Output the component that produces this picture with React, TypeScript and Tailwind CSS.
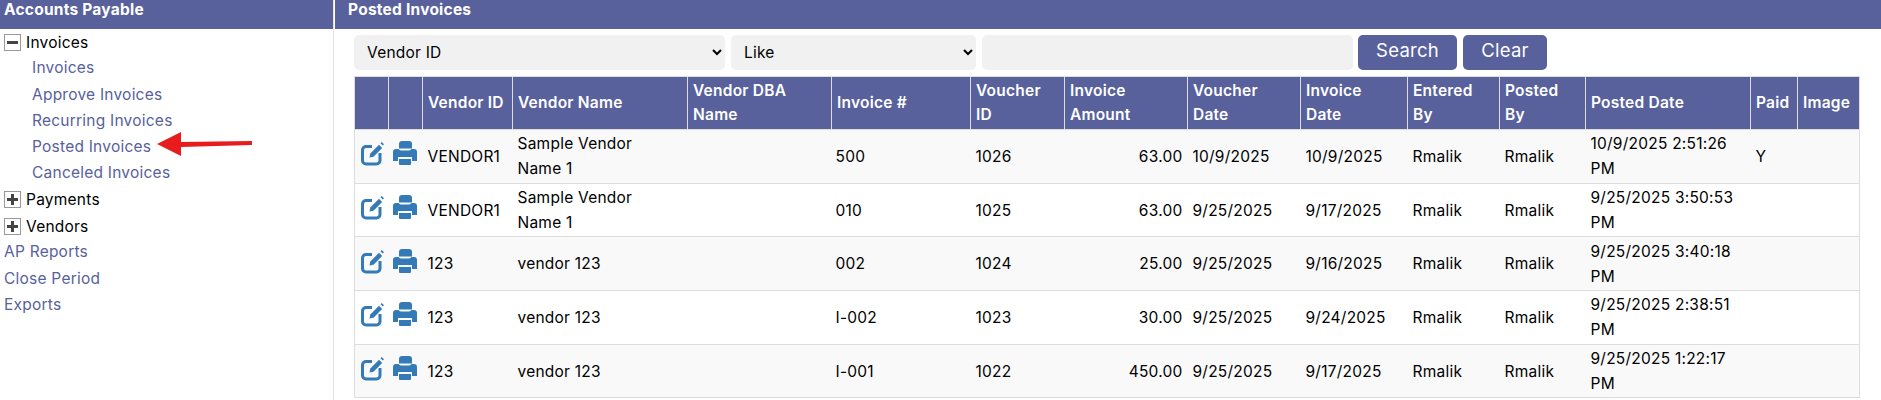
const rows = [
  { id: "VENDOR1", name: "Sample Vendor\nName 1", inv: "500", vch: "1026", amt: "63.00", vDate: "10/9/2025", iDate: "10/9/2025", posted: "10/9/2025 2:51:26\nPM", paid: "Y" },
  { id: "VENDOR1", name: "Sample Vendor\nName 1", inv: "010", vch: "1025", amt: "63.00", vDate: "9/25/2025", iDate: "9/17/2025", posted: "9/25/2025 3:50:53\nPM", paid: "" },
  { id: "123", name: "vendor 123", inv: "002", vch: "1024", amt: "25.00", vDate: "9/25/2025", iDate: "9/16/2025", posted: "9/25/2025 3:40:18\nPM", paid: "" },
  { id: "123", name: "vendor 123", inv: "I-002", vch: "1023", amt: "30.00", vDate: "9/25/2025", iDate: "9/24/2025", posted: "9/25/2025 2:38:51\nPM", paid: "" },
  { id: "123", name: "vendor 123", inv: "I-001", vch: "1022", amt: "450.00", vDate: "9/25/2025", iDate: "9/17/2025", posted: "9/25/2025 1:22:17\nPM", paid: "" },
];

const headers = ["", "", "Vendor ID", "Vendor Name", "Vendor DBA\nName", "Invoice #", "Voucher\nID", "Invoice\nAmount", "Voucher\nDate", "Invoice\nDate", "Entered\nBy", "Posted\nBy", "Posted Date", "Paid", "Image"];

function EditIcon() {
  return (
    <svg width="30" height="30" viewBox="0 0 30 30" className="block -mt-[8px]">
      <path d="M14 9.500H8a3.500 3.500 0 0 0-3.500 3.500v10.500A3.500 3.500 0 0 0 8 27h10.500a3.500 3.500 0 0 0 3.500-3.500V16" fill="none" stroke="#337ab7" strokeWidth="3" />
      <path d="M11.500 20.500l0.800-4 8.700-8.700 3.200 3.200-8.700 8.700z" fill="#337ab7" />
      <path d="M22.500 6.300l1.300-1.300 2.200 2.200-1.300 1.300z" fill="#337ab7" />
    </svg>
  );
}

function PrintIcon() {
  return (
    <svg width="30" height="30" viewBox="0 0 30 30" className="block -mt-[8px]">
      <path d="M9 11.500V7a3 3 0 0 1 3-3h7a3 3 0 0 1 3 3v4.500z" fill="#337ab7" />
      <path d="M3 15a3 3 0 0 1 3-3h2.500c1 1.300 2 1.500 3.500 1.500h6c1.500 0 2.500-.2 3.500-1.500H24a3 3 0 0 1 3 3v9h-5v-4H8v4H3z" fill="#337ab7" />
      <path d="M9 22h12v5a1 1 0 0 1-1 1H10a1 1 0 0 1-1-1z" fill="#337ab7" />
    </svg>
  );
}

function Toggle({ open }: { open?: boolean }) {
  return (
    <span className="w-[17px] h-[17px] border border-[#999] flex items-center justify-center shrink-0 relative">
      <span className="w-[11px] h-[3px] bg-[#444]"></span>
      {!open && <span className="absolute w-[3px] h-[11px] bg-[#444]"></span>}
    </span>
  );
}

function TreeRow({ label, open }: { label: string; open?: boolean }) {
  return (
    <div className="flex items-center gap-[5px] h-[26.3px] pl-1 text-black">
      <Toggle open={open} />
      <span>{label}</span>
    </div>
  );
}

function NavLink({ label, sub }: { label: string; sub?: boolean }) {
  return <div className={`h-[26.3px] leading-[26.3px] text-[#58619c] ${sub ? "pl-8" : "pl-1"}`}>{label}</div>;
}

export default function App() {
  return (
    <div className="flex w-[1881px] h-[400px] overflow-hidden bg-white text-[15.5px] tracking-[0.015em] text-black font-['Inter',sans-serif] relative">
      <div className="w-[334px] shrink-0 border-r border-[#e2e2e2]">
        <div className="h-[29px] bg-[#58619c] text-white font-bold px-1 leading-[20px]">Accounts Payable</div>
        <div>
          <TreeRow label="Invoices" open />
          <NavLink label="Invoices" sub />
          <NavLink label="Approve Invoices" sub />
          <NavLink label="Recurring Invoices" sub />
          <NavLink label="Posted Invoices" sub />
          <NavLink label="Canceled Invoices" sub />
          <TreeRow label="Payments" />
          <TreeRow label="Vendors" />
          <NavLink label="AP Reports" />
          <NavLink label="Close Period" />
          <NavLink label="Exports" />
        </div>
      </div>

      <div className="flex-1 min-w-0 ml-[1px]">
        <div className="h-[29px] bg-[#58619c] text-white font-bold pl-[13px] leading-[20px]">Posted Invoices</div>
        <div className="pl-[19px] pr-[22px] pt-[6px]">
          <div className="flex gap-[6px] h-[35px]">
            <select className="w-[371px] rounded-[5px] bg-[#f1f1f1] pl-[9px] pr-[4px] pb-[1px]">
              <option>Vendor ID</option>
            </select>
            <select className="w-[245px] rounded-[5px] bg-[#f1f1f1] pl-[9px] pr-[4px] pb-[1px]">
              <option>Like</option>
            </select>
            <input className="w-[371px] rounded-[5px] bg-[#f1f1f1]" />
            <button className="w-[99px] -ml-[1px] rounded-[5px] bg-[#58619c] text-white text-[18.500px] pb-[3px]">Search</button>
            <button className="w-[84px] rounded-[5px] bg-[#58619c] text-white text-[18.500px] pb-[3px]">Clear</button>
          </div>
          <table className="table-fixed border-collapse w-[1505px] mt-[6px]">
            <colgroup>
              <col className="w-[34px]" />
              <col className="w-[34px]" />
              <col className="w-[90px]" />
              <col className="w-[175px]" />
              <col className="w-[144px]" />
              <col className="w-[139px]" />
              <col className="w-[94px]" />
              <col className="w-[123px]" />
              <col className="w-[113px]" />
              <col className="w-[107px]" />
              <col className="w-[92px]" />
              <col className="w-[86px]" />
              <col className="w-[165px]" />
              <col className="w-[47px]" />
              <col className="w-[62px]" />
            </colgroup>
            <thead>
              <tr className="h-[53px] bg-[#58619c] text-white">
                {headers.map((h, i) => (
                  <th key={i} className="border border-[#ddd] px-[5px] text-left font-semibold leading-[24px] whitespace-pre-line">{h}</th>
                ))}
              </tr>
            </thead>
            <tbody>
              {rows.map((r, i) => (
                <tr key={i} className={`h-[53.7px] leading-[25px] whitespace-pre-line ${i % 2 === 0 ? "bg-[#f9f9f9]" : "bg-white"}`}>
                  <td className="border border-[#ddd] border-r-0 pl-[3px]"><EditIcon /></td>
                  <td className="border-y border-[#ddd] pl-[1px]"><PrintIcon /></td>
                  <td className="border-y border-[#ddd] px-[5px]">{r.id}</td>
                  <td className="border-y border-[#ddd] px-[5px]">{r.name}</td>
                  <td className="border-y border-[#ddd] px-[5px]"></td>
                  <td className="border-y border-[#ddd] pl-[4px] pr-[5px]">{r.inv}</td>
                  <td className="border-y border-[#ddd] px-[5px]">{r.vch}</td>
                  <td className="border-y border-[#ddd] px-[5px] text-right">{r.amt}</td>
                  <td className="border-y border-[#ddd] px-[5px]">{r.vDate}</td>
                  <td className="border-y border-[#ddd] px-[5px]">{r.iDate}</td>
                  <td className="border-y border-[#ddd] px-[5px]">Rmalik</td>
                  <td className="border-y border-[#ddd] px-[5px]">Rmalik</td>
                  <td className="border-y border-[#ddd] px-[5px]">{r.posted}</td>
                  <td className="border-y border-[#ddd] px-[5px]">{r.paid}</td>
                  <td className="border border-[#ddd] border-l-0 px-[5px]"></td>
                </tr>
              ))}
            </tbody>
          </table>
        </div>
      </div>

      {/* red annotation arrow */}
      <svg className="absolute left-[150px] top-[125px]" width="110" height="40" viewBox="0 0 110 40">
        <polygon points="7,19 31,7 31,17 102,16 102,20 31,22 31,31" fill="#e81c1c" />
      </svg>
    </div>
  );
}
